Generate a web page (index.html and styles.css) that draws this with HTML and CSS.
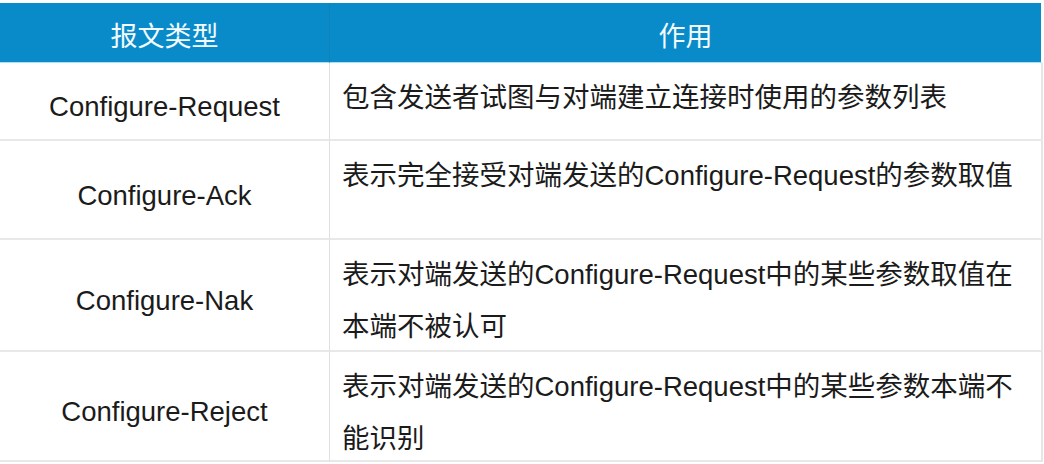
FILE: index.html
```html
<!DOCTYPE html>
<html lang="zh-CN">
<head>
<meta charset="utf-8">
<title>报文类型</title>
<link rel="stylesheet" href="styles.css">
</head>
<body>
<div class="page">
  <div class="msg-table">
    <div class="cell head head-type">报文类型</div>
    <div class="cell head head-use">作用</div>

    <div class="cell name row1">Configure-Request</div>
    <div class="cell desc row1">包含发送者试图与对端建立连接时使用的参数列表</div>

    <div class="cell name row2">Configure-Ack</div>
    <div class="cell desc row2">表示完全接受对端发送的Configure-Request的参数取值</div>

    <div class="cell name row3">Configure-Nak</div>
    <div class="cell desc row3">表示对端发送的Configure-Request中的某些参数取值在本端不被认可</div>

    <div class="cell name row4">Configure-Reject</div>
    <div class="cell desc row4">表示对端发送的Configure-Request中的某些参数本端不能识别</div>
  </div>
</div>
</body>
</html>
```
FILE: styles.css
```css
html, body {
  margin: 0;
  padding: 0;
  background: #ffffff;
  overflow: hidden;
}

body {
  font-family: "Liberation Sans", "Noto Sans CJK SC", sans-serif;
  color: #1b1b1b;
}

.page {
  padding-top: 3px;
}

.msg-table {
  display: grid;
  grid-template-columns: 330px 713px;
  grid-template-rows: 60px 78px 99px 112px 110px;
  width: 1043px;
}

.cell {
  box-sizing: border-box;
}

.head {
  background: #0a8bc9;
  color: #f4fbff;
  font-size: 27px;
  display: flex;
  align-items: center;
  justify-content: center;
  padding-top: 4px;
  border-bottom: 1px solid #a6e2f2;
}

.head-type {
  border-right: 1px solid #1580b6;
}

.head-use {
  border-right: 2px solid #ffffff;
  box-shadow: inset -0px 0 0 #0a8bc9;
}

.name {
  display: flex;
  align-items: center;
  justify-content: center;
  font-size: 27.5px;
  padding-top: 12px;
  border-right: 1px solid #e0e0e0;
  border-bottom: 2px solid #e8e8e8;
}

.desc {
  font-size: 27.5px;
  line-height: 52px;
  padding: 9px 13px 0 12px;
  border-bottom: 2px solid #e8e8e8;
  border-right: 2px solid #e6e6e6;
}
```
